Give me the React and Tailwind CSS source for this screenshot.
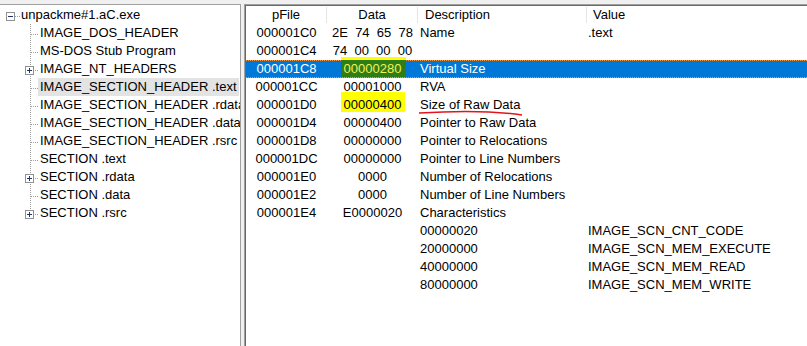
import React from 'react';

const tree = [
  { label: 'IMAGE_DOS_HEADER' },
  { label: 'MS-DOS Stub Program' },
  { label: 'IMAGE_NT_HEADERS', plus: true },
  { label: 'IMAGE_SECTION_HEADER .text', selected: true },
  { label: 'IMAGE_SECTION_HEADER .rdata' },
  { label: 'IMAGE_SECTION_HEADER .data' },
  { label: 'IMAGE_SECTION_HEADER .rsrc' },
  { label: 'SECTION .text' },
  { label: 'SECTION .rdata', plus: true },
  { label: 'SECTION .data' },
  { label: 'SECTION .rsrc', plus: true, last: true },
];

const rows = [
  { off: '000001C0', data: '2E  74  65  78', desc: 'Name', val: '.text' },
  { off: '000001C4', data: '74  00  00  00', desc: '', val: '' },
  { off: '000001C8', data: '00000280', desc: 'Virtual Size', val: '', sel: true },
  { off: '000001CC', data: '00001000', desc: 'RVA', val: '' },
  { off: '000001D0', data: '00000400', desc: 'Size of Raw Data', val: '', marked: true },
  { off: '000001D4', data: '00000400', desc: 'Pointer to Raw Data', val: '' },
  { off: '000001D8', data: '00000000', desc: 'Pointer to Relocations', val: '' },
  { off: '000001DC', data: '00000000', desc: 'Pointer to Line Numbers', val: '' },
  { off: '000001E0', data: '0000', desc: 'Number of Relocations', val: '' },
  { off: '000001E2', data: '0000', desc: 'Number of Line Numbers', val: '' },
  { off: '000001E4', data: 'E0000020', desc: 'Characteristics', val: '' },
  { off: '', data: '', desc: '00000020', val: 'IMAGE_SCN_CNT_CODE' },
  { off: '', data: '', desc: '20000000', val: 'IMAGE_SCN_MEM_EXECUTE' },
  { off: '', data: '', desc: '40000000', val: 'IMAGE_SCN_MEM_READ' },
  { off: '', data: '', desc: '80000000', val: 'IMAGE_SCN_MEM_WRITE' },
];

// little +/- box of the tree view
function ExpandBox({ x, plus }) {
  return (
    <g>
      <rect x={x + 0.5} y="6.5" width="8" height="8" fill="#fff" stroke="#919191" />
      <line x1={x + 2} y1="10.5" x2={x + 7} y2="10.5" stroke="#1f3670" />
      {plus && <line x1={x + 4.5} y1="8" x2={x + 4.5} y2="13" stroke="#1f3670" />}
    </g>
  );
}

function Gutter({ plus, last }) {
  return (
    <svg width="18" height="18" className="shrink-0">
      <line x1="10.5" y1="0" x2="10.5" y2={last ? 10 : 18} stroke="#a0a0a0" strokeDasharray="1 1" />
      <line x1="11" y1="10.5" x2="18" y2="10.5" stroke="#a0a0a0" strokeDasharray="1 1" />
      {plus && <ExpandBox x={5} plus />}
    </svg>
  );
}

function Row({ r }) {
  return (
    <div
      className={`flex h-[18px] ${
        r.sel
          ? 'bg-[#0078d7] text-white border-y border-dotted border-[#f59b45] leading-[16px]'
          : 'leading-[18px]'
      }`}
    >
      <div className="w-[81px] shrink-0 text-center">{r.off}</div>
      <div className="w-[91px] shrink-0 text-center relative whitespace-pre">
        {r.sel && (
          <>
            <span className="absolute left-[14px] top-[-4px] w-[65px] h-[3px] bg-[#ffff00]" />
            <span className="absolute left-[14px] top-[-1px] bottom-0 w-[65px] bg-[#2e7d16]" />
          </>
        )}
        {r.marked && <span className="absolute left-[14px] top-[-4px] w-[64px] h-[20px] bg-[#ffff00]" />}
        <span className={`relative ${r.sel ? 'text-[#eef25a]' : ''}`}>{r.data}</span>
      </div>
      <div className="w-[169px] shrink-0 pl-[2px] relative">
        {r.desc}
        {r.marked && (
          <svg width="110" height="10" className="absolute left-0 top-[13px] overflow-visible">
            <path d="M1 4 C 25 2.5, 70 1, 104 6" fill="none" stroke="#e3141c" strokeWidth="1.6" />
          </svg>
        )}
      </div>
      <div className="pl-[1px] whitespace-nowrap">{r.val}</div>
    </div>
  );
}

export default function App() {
  return (
    <div className="flex h-[346px] w-[807px] bg-[#f0f0f0] pt-[4px] overflow-hidden font-['Liberation_Sans',Arial,sans-serif] text-[13px] text-black">
      {/* Tree */}
      <div className="w-[241px] shrink-0 bg-white border-t border-r border-[#a0a0a0] pt-[1px] overflow-hidden">
        <div className="flex h-[18px] leading-[18px] items-center">
          <svg width="21" height="18" className="shrink-0">
            <ExpandBox x={6} />
            <line x1="15" y1="10.5" x2="21" y2="10.5" stroke="#a0a0a0" strokeDasharray="1 1" />
          </svg>
          <span className="whitespace-nowrap">unpackme#1.aC.exe</span>
        </div>
        {tree.map((n, i) => (
          <div key={i} className="flex h-[18px] leading-[18px]">
            <div className="w-[20px] shrink-0" />
            <Gutter plus={n.plus} last={n.last} />
            <span className={`whitespace-nowrap px-[2px] ${n.selected ? 'bg-[#e3e3e3]' : ''}`}>{n.label}</span>
          </div>
        ))}
      </div>

      {/* List */}
      <div className="ml-[3px] flex-1 border-t border-l border-[#a0a0a0] overflow-hidden">
        <div className="h-full bg-white border-t border-l border-[#696969]">
          <div className="flex h-[18px] leading-[18px]">
            <div className="w-[81px] shrink-0 text-center border-r border-[#e5e5e5] my-[1px] leading-[16px]">pFile</div>
            <div className="w-[91px] shrink-0 text-center border-r border-[#e5e5e5] my-[1px] leading-[16px]">Data</div>
            <div className="w-[169px] shrink-0 pl-[7px] border-r border-[#e5e5e5] my-[1px] leading-[16px]">Description</div>
            <div className="pl-[6px]">Value</div>
          </div>
          {rows.map((r, i) => (
            <Row key={i} r={r} />
          ))}
        </div>
      </div>
    </div>
  );
}
